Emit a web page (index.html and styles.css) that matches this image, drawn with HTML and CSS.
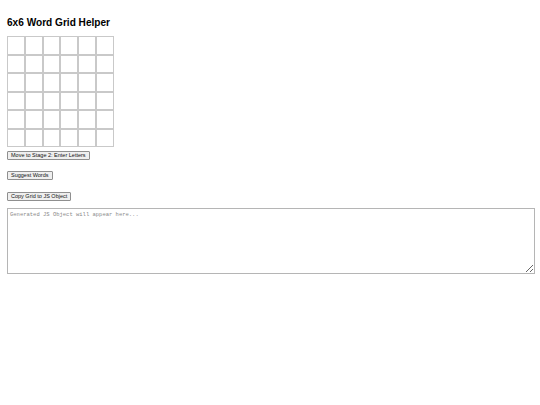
FILE: index.html
```html
<!DOCTYPE html>
<html lang="en">
<head>
<meta charset="utf-8">
<title>6x6 Word Grid Helper</title>
<link rel="stylesheet" href="styles.css">
</head>
<body>
  <h1 class="title">6x6 Word Grid Helper</h1>
  <div class="grid">
    <input class="cell"><input class="cell"><input class="cell"><input class="cell"><input class="cell"><input class="cell">
    <input class="cell"><input class="cell"><input class="cell"><input class="cell"><input class="cell"><input class="cell">
    <input class="cell"><input class="cell"><input class="cell"><input class="cell"><input class="cell"><input class="cell">
    <input class="cell"><input class="cell"><input class="cell"><input class="cell"><input class="cell"><input class="cell">
    <input class="cell"><input class="cell"><input class="cell"><input class="cell"><input class="cell"><input class="cell">
    <input class="cell"><input class="cell"><input class="cell"><input class="cell"><input class="cell"><input class="cell">
  </div>
  <div class="actions">
    <div class="row row-stage"><button class="btn">Move to Stage 2: Enter Letters</button></div>
    <div class="row row-suggest"><button class="btn">Suggest Words</button></div>
    <div class="row row-copy"><button class="btn">Copy Grid to JS Object</button></div>
  </div>
  <textarea class="output" placeholder="Generated JS Object will appear here..."></textarea>
</body>
</html>
```
FILE: styles.css
```css
html, body {
  background: #ffffff;
}

body {
  margin: 0;
  padding: 16px 5px 0 7px;
  font-family: "Liberation Sans", Arial, sans-serif;
  color: #000;
}

.title {
  margin: 0 0 6px 0;
  font-size: 10.1px;
  line-height: 14px;
  font-weight: bold;
}

.grid {
  display: grid;
  grid-template-columns: repeat(6, 17.83px);
  grid-auto-rows: 18.5px;
  width: max-content;
}

.cell {
  box-sizing: border-box;
  width: 100%;
  height: 100%;
  margin: 0;
  padding: 0;
  border: 1px solid #c9c9c9;
  background: #fff;
  font-size: 10px;
  text-align: center;
}

.actions {
  display: flex;
  flex-direction: column;
}

.row {
  display: flex;
}

.row-stage { margin-top: 4px; }
.row-suggest { margin-top: 11px; }
.row-copy { margin-top: 12px; }

.btn {
  box-sizing: border-box;
  height: 9px;
  margin: 0;
  padding: 0 3px;
  border: 1px solid #8f8f8f;
  border-radius: 1px;
  background: #efefef;
  font-family: "Liberation Sans", Arial, sans-serif;
  font-size: 5.5px;
  line-height: 7px;
  color: #111;
}

.output {
  display: block;
  box-sizing: border-box;
  width: 528px;
  height: 66px;
  margin: 7px 0 0 0;
  padding: 2px;
  border: 1px solid #b5b5b5;
  font-family: "Liberation Mono", "Courier New", monospace;
  font-size: 5.5px;
  line-height: 7px;
  resize: both;
}

.output::placeholder {
  color: #8a8a8a;
}
```
